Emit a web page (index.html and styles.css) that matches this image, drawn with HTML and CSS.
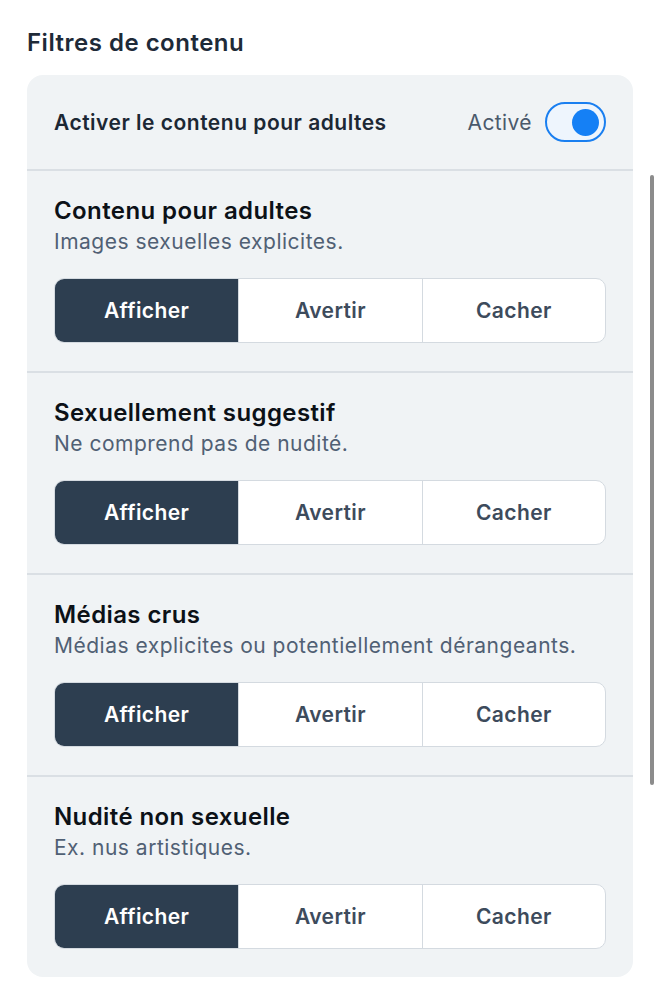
FILE: index.html
```html
<!DOCTYPE html>
<html lang="fr">
<head>
<meta charset="utf-8">
<link rel="stylesheet" href="styles.css">
</head>
<body>
<div class="page">
  <h2 class="heading">Filtres de contenu</h2>
  <div class="card">
    <div class="row-head">
      <span class="head-label">Activer le contenu pour adultes</span>
      <div class="toggle-wrap">
        <span class="toggle-label">Activé</span>
        <span class="toggle"><span class="knob"></span></span>
      </div>
    </div>
    <div class="section">
      <div class="title">Contenu pour adultes</div>
      <div class="desc">Images sexuelles explicites.</div>
      <div class="seg">
        <div class="opt on">Afficher</div>
        <div class="opt">Avertir</div>
        <div class="opt">Cacher</div>
      </div>
    </div>
    <div class="section">
      <div class="title">Sexuellement suggestif</div>
      <div class="desc">Ne comprend pas de nudité.</div>
      <div class="seg">
        <div class="opt on">Afficher</div>
        <div class="opt">Avertir</div>
        <div class="opt">Cacher</div>
      </div>
    </div>
    <div class="section">
      <div class="title">Médias crus</div>
      <div class="desc">Médias explicites ou potentiellement dérangeants.</div>
      <div class="seg">
        <div class="opt on">Afficher</div>
        <div class="opt">Avertir</div>
        <div class="opt">Cacher</div>
      </div>
    </div>
    <div class="section">
      <div class="title">Nudité non sexuelle</div>
      <div class="desc">Ex. nus artistiques.</div>
      <div class="seg">
        <div class="opt on">Afficher</div>
        <div class="opt">Avertir</div>
        <div class="opt">Cacher</div>
      </div>
    </div>
  </div>
</div>
<div class="scrollbar"></div>
</body>
</html>
```

FILE: styles.css
```css
html, body {
  margin: 0;
  padding: 0;
  background: #ffffff;
  font-family: Inter, "Noto Sans", sans-serif;
}
.page {
  padding: 29px 27px 0 27px;
}
.heading {
  margin: 0 0 18px 0;
  font-size: 24px;
  line-height: 28px;
  font-weight: 600;
  letter-spacing: 0.5px;
  color: #1e2a38;
}
.card {
  background: #f0f3f5;
  border-radius: 16px;
  overflow: hidden;
}
.row-head {
  height: 94px;
  display: flex;
  align-items: center;
  justify-content: space-between;
  padding: 0 27px;
}
.head-label {
  font-size: 21px;
  font-weight: 600;
  letter-spacing: 0.5px;
  color: #1c2734;
}
.toggle-wrap {
  display: flex;
  align-items: center;
  gap: 13px;
}
.toggle-label {
  font-size: 21px;
  letter-spacing: 0.4px;
  color: #4a596b;
}
.toggle {
  box-sizing: border-box;
  width: 61px;
  height: 40px;
  border: 2px solid #1a7ff0;
  border-radius: 20px;
  background: #eef5fd;
  display: flex;
  align-items: center;
  justify-content: flex-end;
  padding-right: 5px;
}
.knob {
  width: 27px;
  height: 27px;
  border-radius: 50%;
  background: #1580f5;
}
.section {
  border-top: 2px solid #dadfe4;
  padding: 26px 27px 28px 27px;
}
.title {
  font-size: 24px;
  line-height: 28px;
  font-weight: 600;
  letter-spacing: 0.4px;
  color: #0c1117;
}
.desc {
  margin-top: 5px;
  font-size: 21px;
  line-height: 24px;
  letter-spacing: 0.5px;
  color: #506074;
}
.seg {
  margin-top: 24px;
  height: 65px;
  display: grid;
  grid-template-columns: 1fr 1fr 1fr;
  border: 1px solid #d4dae0;
  border-radius: 10px;
  overflow: hidden;
  background: #ffffff;
  box-sizing: border-box;
}
.opt {
  display: flex;
  align-items: center;
  justify-content: center;
  font-size: 21px;
  font-weight: 600;
  letter-spacing: 0.4px;
  color: #3d4b5c;
  border-left: 1px solid #d4dae0;
}
.opt:first-child {
  border-left: none;
}
.opt.on {
  background: #2d3e50;
  color: #ffffff;
}
.scrollbar {
  position: absolute;
  left: 650px;
  top: 175px;
  width: 4px;
  height: 610px;
  border-radius: 2px;
  background: #8c8c8c;
}
```
